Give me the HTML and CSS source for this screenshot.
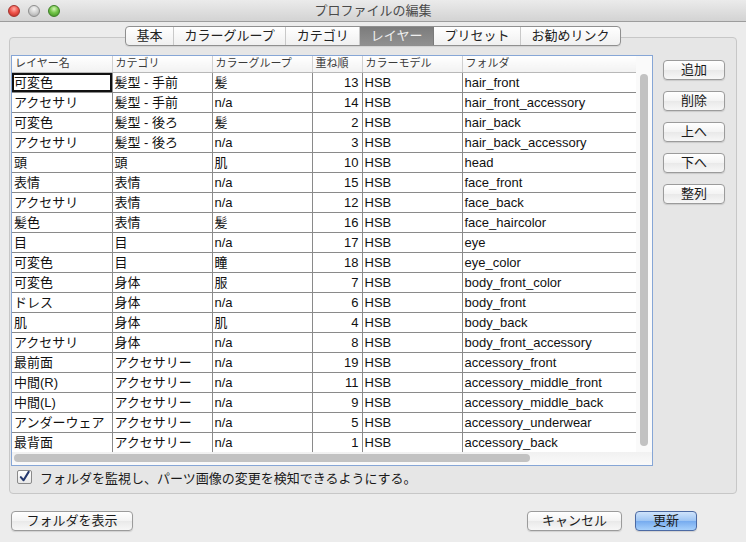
FILE: index.html
```html
<!DOCTYPE html>
<html lang="ja">
<head>
<meta charset="utf-8">
<title>プロファイルの編集</title>
<link rel="stylesheet" href="styles.css">
</head>
<body>
<div class="window">
  <div class="titlebar">
    <div class="lights">
      <span class="light red"></span>
      <span class="light gray"></span>
      <span class="light green"></span>
    </div>
    <div class="title">プロファイルの編集</div>
    <div></div>
  </div>

  <div class="tabs">
    <span class="tab">基本</span>
    <span class="tab">カラーグループ</span>
    <span class="tab">カテゴリ</span>
    <span class="tab selected">レイヤー</span>
    <span class="tab">プリセット</span>
    <span class="tab last">お勧めリンク</span>
  </div>

  <div class="panel">
    <div class="panel-body">
      <div class="tablebox">
        <div class="tablemain">
          <div class="tablearea">
            <table class="grid">
              <colgroup>
                <col class="c1"><col class="c2"><col class="c3"><col class="c4"><col class="c5"><col class="c6">
              </colgroup>
              <thead>
                <tr><th>レイヤー名</th><th>カテゴリ</th><th>カラーグループ</th><th>重ね順</th><th>カラーモデル</th><th>フォルダ</th></tr>
              </thead>
              <tbody>
                <tr><td class="focus">可変色</td><td>髪型 - 手前</td><td>髪</td><td class="num">13</td><td>HSB</td><td>hair_front</td></tr>
                <tr><td>アクセサリ</td><td>髪型 - 手前</td><td>n/a</td><td class="num">14</td><td>HSB</td><td>hair_front_accessory</td></tr>
                <tr><td>可変色</td><td>髪型 - 後ろ</td><td>髪</td><td class="num">2</td><td>HSB</td><td>hair_back</td></tr>
                <tr><td>アクセサリ</td><td>髪型 - 後ろ</td><td>n/a</td><td class="num">3</td><td>HSB</td><td>hair_back_accessory</td></tr>
                <tr><td>頭</td><td>頭</td><td>肌</td><td class="num">10</td><td>HSB</td><td>head</td></tr>
                <tr><td>表情</td><td>表情</td><td>n/a</td><td class="num">15</td><td>HSB</td><td>face_front</td></tr>
                <tr><td>アクセサリ</td><td>表情</td><td>n/a</td><td class="num">12</td><td>HSB</td><td>face_back</td></tr>
                <tr><td>髪色</td><td>表情</td><td>髪</td><td class="num">16</td><td>HSB</td><td>face_haircolor</td></tr>
                <tr><td>目</td><td>目</td><td>n/a</td><td class="num">17</td><td>HSB</td><td>eye</td></tr>
                <tr><td>可変色</td><td>目</td><td>瞳</td><td class="num">18</td><td>HSB</td><td>eye_color</td></tr>
                <tr><td>可変色</td><td>身体</td><td>服</td><td class="num">7</td><td>HSB</td><td>body_front_color</td></tr>
                <tr><td>ドレス</td><td>身体</td><td>n/a</td><td class="num">6</td><td>HSB</td><td>body_front</td></tr>
                <tr><td>肌</td><td>身体</td><td>肌</td><td class="num">4</td><td>HSB</td><td>body_back</td></tr>
                <tr><td>アクセサリ</td><td>身体</td><td>n/a</td><td class="num">8</td><td>HSB</td><td>body_front_accessory</td></tr>
                <tr><td>最前面</td><td>アクセサリー</td><td>n/a</td><td class="num">19</td><td>HSB</td><td>accessory_front</td></tr>
                <tr><td>中間(R)</td><td>アクセサリー</td><td>n/a</td><td class="num">11</td><td>HSB</td><td>accessory_middle_front</td></tr>
                <tr><td>中間(L)</td><td>アクセサリー</td><td>n/a</td><td class="num">9</td><td>HSB</td><td>accessory_middle_back</td></tr>
                <tr><td>アンダーウェア</td><td>アクセサリー</td><td>n/a</td><td class="num">5</td><td>HSB</td><td>accessory_underwear</td></tr>
                <tr><td>最背面</td><td>アクセサリー</td><td>n/a</td><td class="num">1</td><td>HSB</td><td>accessory_back</td></tr>
              </tbody>
            </table>
          </div>
          <div class="vscroll"><div class="vthumb"></div></div>
        </div>
        <div class="hscroll"><div class="hthumb"></div></div>
      </div>

      <div class="sidebuttons">
        <button class="btn side">追加</button>
        <button class="btn side">削除</button>
        <button class="btn side">上へ</button>
        <button class="btn side">下へ</button>
        <button class="btn side">整列</button>
      </div>
    </div>

    <label class="checkrow">
      <span class="checkbox">
        <svg width="14" height="14" viewBox="0 0 14 14">
          <path d="M3 7.2 L6 10.5 L11.5 1.5" fill="none" stroke="#24386e" stroke-width="2.2" stroke-linecap="round" stroke-linejoin="round"/>
        </svg>
      </span>
      <span class="checklabel">フォルダを監視し、パーツ画像の変更を検知できるようにする。</span>
    </label>
  </div>

  <div class="footer">
    <button class="btn wide">フォルダを表示</button>
    <div class="spacer"></div>
    <button class="btn cancel">キャンセル</button>
    <button class="btn primary">更新</button>
  </div>
</div>
</body>
</html>
```

FILE: styles.css
```css
* { box-sizing: border-box; }

html, body {
  margin: 0;
  padding: 0;
}

body {
  width: 746px;
  height: 542px;
  overflow: hidden;
  background: #ececec;
  font-family: "Liberation Sans", "Noto Sans CJK JP", sans-serif;
  font-size: 13px;
  color: #1a1a1a;
}

.window {
  width: 746px;
  height: 542px;
  background: #ececec;
  display: flex;
  flex-direction: column;
}

/* Title bar */
.titlebar {
  height: 22px;
  display: grid;
  grid-template-columns: 1fr auto 1fr;
  align-items: center;
  background: linear-gradient(#ebebeb, #d3d3d3);
  border-bottom: 1px solid #9d9d9d;
}

.lights {
  display: flex;
  gap: 8px;
  padding-left: 8px;
  align-items: center;
}

.light {
  width: 12px;
  height: 12px;
  border-radius: 50%;
  display: block;
}

.light.red {
  background: radial-gradient(circle at 50% 30%, #ffb0a8 0%, #f0564d 45%, #b5231c 100%);
  border: 1px solid #a3322c;
}
.light.gray {
  background: radial-gradient(circle at 50% 30%, #f6f6f6 0%, #cfcfcf 50%, #a0a0a0 100%);
  border: 1px solid #8e8e8e;
}
.light.green {
  background: radial-gradient(circle at 50% 30%, #d6f5b8 0%, #74c64a 45%, #3c8a1f 100%);
  border: 1px solid #3c7f26;
}

.title {
  font-size: 13px;
  color: #4a4a4a;
  line-height: 22px;
}

/* Tabs */
.tabs {
  position: relative;
  z-index: 1;
  margin-top: 4px;
  align-self: center;
  display: flex;
  height: 20px;
  border: 1px solid #8f8f8f;
  border-radius: 4px;
  background: linear-gradient(#ffffff, #f0f0f0);
  overflow: hidden;
  box-shadow: 0 1px 1px rgba(0,0,0,0.08);
}

.tab {
  padding: 0 10.5px;
  line-height: 18px;
  font-size: 13px;
  color: #222;
  border-right: 1px solid #c9c9c9;
  white-space: nowrap;
}

.tab.last { border-right: none; }

.tab.selected {
  background: linear-gradient(#7c7c7c, #909090);
  color: #efefef;
  border-right-color: #7a7a7a;
}

/* Panel */
.panel {
  margin: -9px 9px 0 9px;
  height: 457px;
  border: 1px solid #c7c7c7;
  border-radius: 4px;
  background: #e6e6e6;
  padding: 17px 0 9px 1px;
  display: flex;
  flex-direction: column;
}

.panel-body {
  display: flex;
  gap: 10px;
  align-items: flex-start;
}

.tablebox {
  width: 642px;
  height: 411px;
  border: 1px solid #86a6d6;
  background: #fff;
  display: flex;
  flex-direction: column;
}

.tablemain {
  display: flex;
  height: 396px;
}

.tablearea {
  width: 624px;
  overflow: hidden;
}

.grid {
  border-collapse: collapse;
  table-layout: fixed;
  width: 624px;
}

.grid col.c1 { width: 100px; }
.grid col.c2 { width: 100px; }
.grid col.c3 { width: 100px; }
.grid col.c4 { width: 50px; }
.grid col.c5 { width: 100px; }
.grid col.c6 { width: 174px; }

.grid th {
  height: 16px;
  padding: 0 0 0 3px;
  font-weight: normal;
  font-size: 11px;
  color: #3a3a3a;
  text-align: left;
  background: linear-gradient(#ffffff, #f2f2f2);
  border-bottom: 1px solid #b8b8b8;
  border-left: 1px solid #d0d0d0;
  line-height: 15px;
  white-space: nowrap;
  overflow: hidden;
}

.grid th:first-child { border-left: none; }

.grid td {
  height: 20px;
  padding: 1px 0 0 2px;
  font-size: 13px;
  color: #111;
  border-bottom: 1px solid #8a8a8a;
  border-left: 1px solid #8a8a8a;
  white-space: nowrap;
  overflow: hidden;
  line-height: 18px;
}

.grid td:first-child { border-left: none; }

.grid td.num {
  text-align: right;
  padding-right: 3px;
}

.grid td.focus {
  box-shadow: inset 0 0 0 2px #111;
}

.vscroll {
  width: 16px;
  background: #fafafa;
  padding: 2px 4px 0 4px;
}

.vthumb {
  width: 8px;
  height: 372px;
  margin-top: 16px;
  border-radius: 4px;
  background: #c2c2c2;
}

.hscroll {
  height: 13px;
  background: linear-gradient(#f1f1f1, #fafafa);
  padding: 2px 0 0 2px;
}

.hthumb {
  width: 516px;
  height: 8px;
  border-radius: 4px;
  background: #c2c2c2;
}

.sidebuttons {
  padding-top: 5px;
  display: flex;
  flex-direction: column;
  gap: 11px;
}

/* Buttons */
.btn {
  font-family: "Liberation Sans", "Noto Sans CJK JP", sans-serif;
  font-size: 13px;
  color: #1a1a1a;
  height: 20px;
  padding: 0;
  border: 1px solid #9b9b9b;
  border-radius: 4px;
  background: linear-gradient(#ffffff, #f3f3f3 50%, #e9e9e9 51%, #f7f7f7);
  box-shadow: 0 1px 1px rgba(0,0,0,0.12);
  line-height: 18px;
}

.btn.side { width: 62px; }

/* Checkbox row */
.checkrow {
  margin-top: 4px;
  margin-left: 6px;
  display: flex;
  align-items: center;
  gap: 8px;
  height: 14px;
}

.checkbox {
  width: 15px;
  height: 14px;
  border: 1px solid #8a8a8a;
  border-radius: 2px;
  background: linear-gradient(#ffffff, #e8e8e8);
  display: flex;
  align-items: center;
  justify-content: center;
}

.checkbox svg { display: block; }

.checklabel {
  font-size: 13px;
  color: #1a1a1a;
  white-space: nowrap;
}

/* Footer */
.footer {
  display: flex;
  align-items: center;
  padding: 17px 49px 0 11px;
  gap: 13px;
}

.spacer { flex: 1; }

.btn.wide { width: 122px; }
.btn.cancel { width: 95px; }

.btn.primary {
  width: 62px;
  border-color: #4c6aa3;
  background: linear-gradient(#cfe3fb, #9cc4f3 50%, #76abef 51%, #a7d0fb);
}
```
